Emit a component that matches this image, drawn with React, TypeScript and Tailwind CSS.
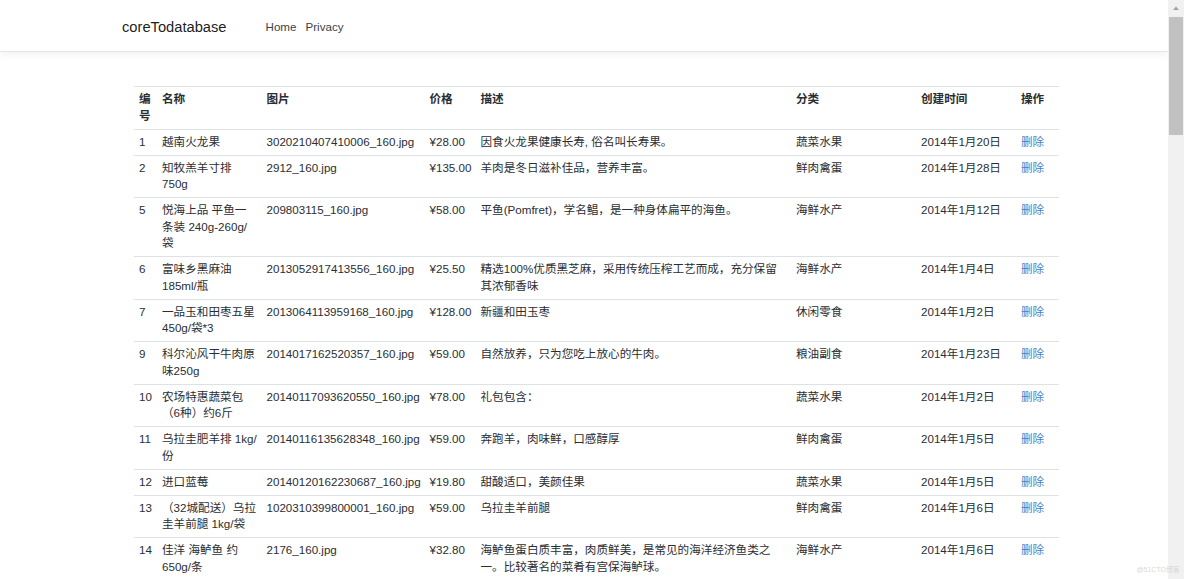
import React from 'react';

type Product = {
  id: number;
  name: string;
  image: string;
  price: string;
  desc: string;
  category: string;
  created: string;
};

const products: Product[] = [
  { id: 1, name: '越南火龙果', image: '3020210407410006_160.jpg', price: '¥28.00', desc: '因食火龙果健康长寿, 俗名叫长寿果。', category: '蔬菜水果', created: '2014年1月20日' },
  { id: 2, name: '知牧羔羊寸排 750g', image: '2912_160.jpg', price: '¥135.00', desc: '羊肉是冬日滋补佳品，营养丰富。', category: '鲜肉禽蛋', created: '2014年1月28日' },
  { id: 5, name: '悦海上品 平鱼一条装 240g-260g/袋', image: '209803115_160.jpg', price: '¥58.00', desc: '平鱼(Pomfret)，学名鲳，是一种身体扁平的海鱼。', category: '海鲜水产', created: '2014年1月12日' },
  { id: 6, name: '富味乡黑麻油 185ml/瓶', image: '2013052917413556_160.jpg', price: '¥25.50', desc: '精选100%优质黑芝麻，采用传统压榨工艺而成，充分保留其浓郁香味', category: '海鲜水产', created: '2014年1月4日' },
  { id: 7, name: '一品玉和田枣五星450g/袋*3', image: '2013064113959168_160.jpg', price: '¥128.00', desc: '新疆和田玉枣', category: '休闲零食', created: '2014年1月2日' },
  { id: 9, name: '科尔沁风干牛肉原味250g', image: '2014017162520357_160.jpg', price: '¥59.00', desc: '自然放养，只为您吃上放心的牛肉。', category: '粮油副食', created: '2014年1月23日' },
  { id: 10, name: '农场特惠蔬菜包（6种）约6斤', image: '20140117093620550_160.jpg', price: '¥78.00', desc: '礼包包含：', category: '蔬菜水果', created: '2014年1月2日' },
  { id: 11, name: '乌拉圭肥羊排 1kg/份', image: '20140116135628348_160.jpg', price: '¥59.00', desc: '奔跑羊，肉味鲜，口感醇厚', category: '鲜肉禽蛋', created: '2014年1月5日' },
  { id: 12, name: '进口蓝莓', image: '20140120162230687_160.jpg', price: '¥19.80', desc: '甜酸适口，美颜佳果', category: '蔬菜水果', created: '2014年1月5日' },
  { id: 13, name: '（32城配送）乌拉圭羊前腿 1kg/袋', image: '1020310399800001_160.jpg', price: '¥59.00', desc: '乌拉圭羊前腿', category: '鲜肉禽蛋', created: '2014年1月6日' },
  { id: 14, name: '佳洋 海鲈鱼 约650g/条', image: '2176_160.jpg', price: '¥32.80', desc: '海鲈鱼蛋白质丰富，肉质鲜美，是常见的海洋经济鱼类之一。比较著名的菜肴有宫保海鲈球。', category: '海鲜水产', created: '2014年1月6日' },
];

const cell = 'pl-[5px] pr-[4px] py-[4.25px] border-t border-[#dee2e6] align-top text-left';

export default function App() {
  return (
    <div className="relative flex h-[579px] w-full overflow-hidden bg-white font-['Liberation_Sans','Noto_Sans_CJK_SC',sans-serif] text-[11.6px] leading-[16.5px] text-[#2a2e33]">
      <div className="flex min-w-0 flex-1 flex-col">
        {/* window edge */}
        <div className="h-px bg-[#4b5866]" />

        {/* Navbar */}
        <header className="flex h-[52px] shrink-0 items-center border-b border-[#e5e5e5] pl-[122px] pt-[3px] shadow-[0_3px_8px_rgba(0,0,0,0.05)]">
          <span className="mr-[39px] text-[14.7px] text-black/90">coreTodatabase</span>
          <nav className="flex gap-[9px] text-[#3a3f45]">
            <span>Home</span>
            <span>Privacy</span>
          </nav>
        </header>

        {/* Table */}
        <main className="pl-[134px] pt-[34px]">
          <table className="w-[925px] table-fixed border-collapse border-b border-[#dee2e6]">
            <colgroup>
              <col className="w-[23px]" />
              <col className="w-[104.5px]" />
              <col className="w-[163px]" />
              <col className="w-[51px]" />
              <col className="w-[315.5px]" />
              <col className="w-[125px]" />
              <col className="w-[100px]" />
              <col className="w-[43px]" />
            </colgroup>
            <thead>
              <tr className="font-bold">
                <th className={cell}>编号</th>
                <th className={cell}>名称</th>
                <th className={cell}>图片</th>
                <th className={cell}>价格</th>
                <th className={cell}>描述</th>
                <th className={cell}>分类</th>
                <th className={cell}>创建时间</th>
                <th className={cell}>操作</th>
              </tr>
            </thead>
            <tbody>
              {products.map((p) => (
                <tr key={p.id}>
                  <td className={cell}>{p.id}</td>
                  <td className={cell}>{p.name}</td>
                  <td className={`${cell} whitespace-nowrap`}>{p.image}</td>
                  <td className={`${cell} whitespace-nowrap`}>{p.price}</td>
                  <td className={cell}>{p.desc}</td>
                  <td className={cell}>{p.category}</td>
                  <td className={cell}>{p.created}</td>
                  <td className={cell}>
                    <span className="text-[#4a80bf]">删除</span>
                  </td>
                </tr>
              ))}
            </tbody>
          </table>
        </main>
      </div>

      {/* Scrollbar */}
      <div className="flex w-4 shrink-0 flex-col items-center bg-[#f1f1f1]">
        <svg width="16" height="17" viewBox="0 0 16 17" className="shrink-0">
          <path d="M5 10 L8 6.5 L11 10 Z" fill="#a3a3a3" />
        </svg>
        <div className="h-[118px] w-[14px] bg-[#c1c1c1]" />
      </div>

      {/* watermark */}
      <span className="absolute bottom-[5px] right-[4px] text-[7px] leading-[8px] text-[#d8d8d8]">@51CTO博客</span>
    </div>
  );
}
